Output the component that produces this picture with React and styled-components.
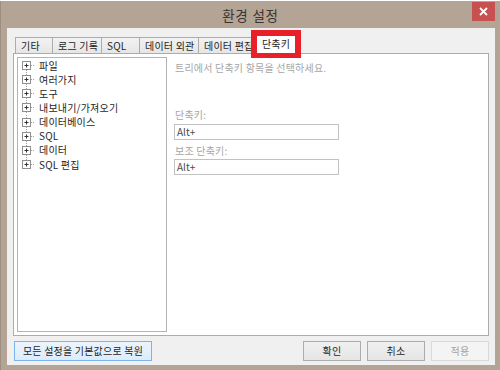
import React from "react";
import styled, { createGlobalStyle } from "styled-components";

const GlobalStyle = createGlobalStyle`
  body {
    margin: 0;
    background: #fff;
    font-family: "Noto Sans CJK KR", "Noto Sans", sans-serif;
  }
`;

const tabs = [
  { label: "기타", width: 38 },
  { label: "로그 기록", width: 50 },
  { label: "SQL", width: 39 },
  { label: "데이터 외관", width: 60 },
  { label: "데이터 편집", width: 58 },
];

const treeItems = ["파일", "여러가지", "도구", "내보내기/가져오기", "데이터베이스", "SQL", "데이터", "SQL 편집"];

const TreeIcon = ({ first, last }) => (
  <svg width="18" height="14" viewBox="0 0 18 14">
    {!first && <line x1="8.5" y1="0" x2="8.5" y2="3" stroke="#a0a0a0" strokeDasharray="1 1" />}
    {!last && <line x1="8.5" y1="12" x2="8.5" y2="14" stroke="#a0a0a0" strokeDasharray="1 1" />}
    <line x1="13" y1="7.5" x2="17" y2="7.5" stroke="#a0a0a0" strokeDasharray="1 1" />
    <rect x="4.5" y="3.5" width="8" height="8" fill="#fff" stroke="#8e8f8f" />
    <line x1="6.5" y1="7.5" x2="10.5" y2="7.5" stroke="#333" />
    <line x1="8.5" y1="5.5" x2="8.5" y2="9.5" stroke="#333" />
  </svg>
);

const App = () => {
  return (
    <>
      <GlobalStyle />
      <Window>
        <TitleBar>
          <span />
          <Title>환경 설정</Title>
          <CloseButton>
            <svg width="9" height="9" viewBox="0 0 9 9">
              <path d="M1 1 L8 8 M8 1 L1 8" stroke="#fff" strokeWidth="1.8" />
            </svg>
          </CloseButton>
        </TitleBar>
        <Client>
          <TabRow>
            {tabs.map((t) => (
              <Tab key={t.label} $width={t.width}>{t.label}</Tab>
            ))}
            <ActiveTab>
              단축키
              <Marker />
            </ActiveTab>
          </TabRow>
          <Panel>
            <TreeBox>
              {treeItems.map((item, i) => (
                <TreeRow key={item}>
                  <TreeIcon first={i === 0} last={i === treeItems.length - 1} />
                  <TreeLabel>{item}</TreeLabel>
                </TreeRow>
              ))}
            </TreeBox>
            <Detail>
              <Hint>트리에서 단축키 항목을 선택하세요.</Hint>
              <FieldLabel $top={33}>단축키:</FieldLabel>
              <KeyInput $top={2}>Alt+</KeyInput>
              <FieldLabel $top={4}>보조 단축키:</FieldLabel>
              <KeyInput $top={1}>Alt+</KeyInput>
            </Detail>
          </Panel>
          <ButtonRow>
            <Button $variant="focus" $width={138}>모든 설정을 기본값으로 복원</Button>
            <Spacer />
            <Button $width={58}>확인</Button>
            <Button $width={58}>취소</Button>
            <Button $variant="disabled" $width={58}>적용</Button>
          </ButtonRow>
        </Client>
      </Window>
    </>
  );
};

export default App;

const Window = styled.div`
  width: 499px;
  height: 369px;
  margin-top: 1px;
  background: #b4a496;
  border-left: 1px solid #9c8e81;
  display: flex;
  flex-direction: column;
`;

const TitleBar = styled.div`
  height: 27px;
  display: grid;
  grid-template-columns: 1fr auto 1fr;
  align-items: center;
`;

const Title = styled.div`
  font-size: 13.5px;
  color: #3a3530;
  letter-spacing: 0.8px;
  padding-top: 1px;
`;

const CloseButton = styled.div`
  justify-self: end;
  align-self: start;
  margin-top: 1px;
  margin-right: 5px;
  width: 23px;
  height: 19px;
  background: #c75050;
  display: flex;
  align-items: center;
  justify-content: center;
`;

const Client = styled.div`
  flex: 1;
  margin: 0 5px 5px 6px;
  background: #f0f0f0;
  padding: 9px 6px 4px 6px;
  display: flex;
  flex-direction: column;
`;

const TabRow = styled.div`
  height: 16px;
  display: flex;
  align-items: flex-end;
  padding-left: 2px;
`;

const Tab = styled.div`
  box-sizing: border-box;
  width: ${({ $width }) => $width}px;
  height: 16px;
  border: 1px solid #acacac;
  border-bottom: none;
  margin-right: -1px;
  background: linear-gradient(#f2f2f2, #e6e6e6);
  font-size: 10px;
  letter-spacing: 0.2px;
  line-height: 15px;
  color: #1e1e1e;
  padding-left: 5px;
  white-space: nowrap;
  overflow: hidden;
`;

const ActiveTab = styled.div`
  position: relative;
  z-index: 2;
  box-sizing: border-box;
  width: 42px;
  height: 18px;
  margin-bottom: -1px;
  background: #fff;
  font-size: 10px;
  letter-spacing: 0.2px;
  line-height: 16px;
  color: #1e1e1e;
  text-align: center;
`;

const Marker = styled.span`
  position: absolute;
  left: -4px;
  right: -4px;
  top: -6px;
  bottom: -4px;
  border: 6px solid #e8202a;
  border-bottom-width: 5px;
`;

const Panel = styled.div`
  flex: 1;
  background: #fff;
  border: 1px solid #acacac;
  padding: 3px;
  display: flex;
  gap: 8px;
`;

const TreeBox = styled.div`
  width: 148px;
  border: 1px solid #b4b4b4;
`;

const TreeRow = styled.div`
  height: 14.15px;
  display: flex;
  align-items: center;
`;

const TreeLabel = styled.span`
  margin-left: 3px;
  font-size: 10px;
  letter-spacing: 0.2px;
  color: #1e1e1e;
  white-space: nowrap;
`;

const Detail = styled.div`
  display: flex;
  flex-direction: column;
  padding-top: 4px;
`;

const Hint = styled.div`
  height: 14px;
  line-height: 14px;
  font-size: 10px;
  letter-spacing: 0.2px;
  color: #a6a6a6;
  white-space: nowrap;
`;

const FieldLabel = styled(Hint)`
  margin-top: ${({ $top }) => $top}px;
`;

const KeyInput = styled.div`
  box-sizing: border-box;
  width: 165px;
  height: 16px;
  margin-left: -1px;
  margin-top: ${({ $top }) => $top}px;
  border: 1px solid #c2c2c2;
  background: #fff;
  font-size: 10px;
  line-height: 14px;
  padding-left: 2px;
  color: #4a4a4a;
`;

const ButtonRow = styled.div`
  margin-top: 5px;
  height: 20px;
  display: flex;
  gap: 6px;
  padding-left: 1px;
`;

const Spacer = styled.div`
  flex: 1;
`;

const Button = styled.div`
  box-sizing: border-box;
  width: ${({ $width }) => $width}px;
  height: 20px;
  border: 1px solid ${({ $variant }) =>
    $variant === "focus" ? "#7eb4ea" : $variant === "disabled" ? "#d9d9d9" : "#acacac"};
  background: ${({ $variant }) =>
    $variant === "focus"
      ? "linear-gradient(#ecf4fc, #dcecfc)"
      : $variant === "disabled"
      ? "#f4f4f4"
      : "linear-gradient(#f0f0f0, #e5e5e5)"};
  color: ${({ $variant }) => ($variant === "disabled" ? "#a3a3a3" : "#1e1e1e")};
  font-size: 10px;
  letter-spacing: 0.2px;
  line-height: 18px;
  text-align: center;
  white-space: nowrap;
`;
